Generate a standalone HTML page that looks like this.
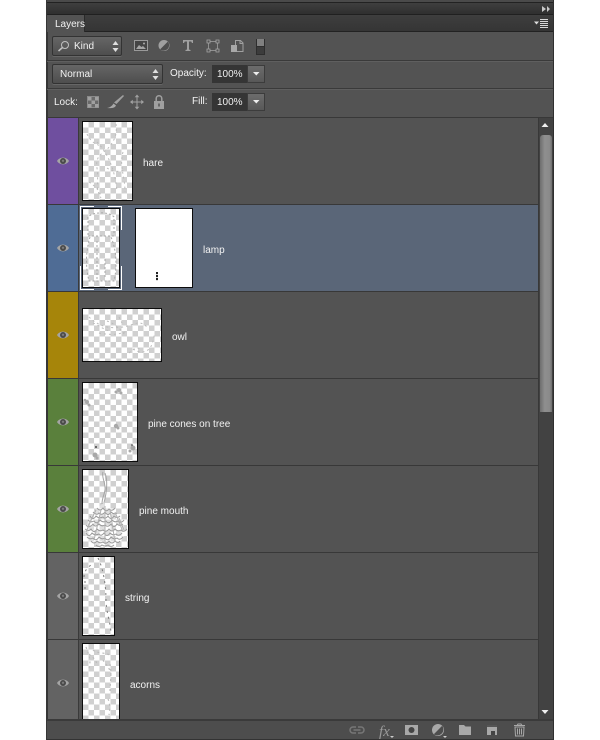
<!DOCTYPE html>
<html><head><meta charset="utf-8">
<style>
html,body{margin:0;padding:0;width:600px;height:740px;overflow:hidden;background:#fff}
*{box-sizing:border-box}
body{font-family:"Liberation Sans",sans-serif;font-size:10px;color:#e8e8e8;position:relative}
.a{position:absolute}
.t{position:absolute;white-space:nowrap;line-height:12px;font-size:10px;color:#f2f2f2;margin-top:1px}
.sep{position:absolute;left:48px;width:490px;height:1px;background:#383838}
.col{position:absolute;left:48px;width:30px}
.th{position:absolute;border:1px solid #0c0c0c;background-color:#fff;background-image:conic-gradient(#d0d0d0 25%,#fff 0 50%,#d0d0d0 0 75%,#fff 0);background-size:11px 11px;background-position:0 0;overflow:hidden}
.th svg{position:absolute;left:0;top:0}
.eye{position:absolute;left:57px}
.dd{position:absolute;border:1px solid #333;border-radius:2px;background:linear-gradient(#666,#4e4e4e);box-shadow:0 1px 0 #666}
.num{position:absolute;left:212px;width:35px;height:18px;background:#353535;color:#f0f0f0;font-size:10px;line-height:20px;padding-left:5px}
.btn{position:absolute;left:247px;width:18px;height:18px;background:linear-gradient(#6c6c6c,#585858);border:1px solid #3c3c3c}
</style></head><body>

<!-- panel shell -->
<div class="a" style="left:46px;top:0;width:508px;height:740px;background:#535353;border-left:2px solid #363636;border-right:1px solid #2f2f2f"></div>
<div class="a" style="left:47px;top:0;width:506px;height:2px;background:#4a4a4a"></div>
<div class="a" style="left:47px;top:2px;width:506px;height:1px;background:#222"></div>
<div class="a" style="left:47px;top:3px;width:506px;height:11px;background:linear-gradient(#3f3f3f,#2f2f2f)"></div>
<div class="a" style="left:47px;top:14px;width:506px;height:1px;background:#202020"></div>
<div class="a" style="left:47px;top:15px;width:506px;height:16px;background:linear-gradient(#3e3e3e,#353535)"></div>
<div class="a" style="left:47px;top:31px;width:506px;height:1px;background:#222"></div>
<div class="a" style="left:47px;top:15px;width:38px;height:17px;background:#535353;border-right:1px solid #2a2a2a"></div>
<div class="t" style="left:55px;top:18px">Layers</div>

<!-- collapse + menu -->
<svg class="a" style="left:541px;top:5px" width="10" height="8"><path d="M1 1l4 3-4 3zM6 1l3 3-3 3z" fill="#c8c8c8"/></svg>
<svg class="a" style="left:534px;top:19px" width="16" height="9"><path d="M0 2.500h5l-2.500 3z" fill="#ddd"/><path d="M6 .5h8M6 2.500h8M6 4.500h8M6 6.500h8M6 8.500h8" stroke="#d8d8d8"/></svg>

<!-- control rows -->
<div class="a" style="left:47px;top:60px;width:506px;height:1px;background:#3a3a3a"></div>
<div class="a" style="left:47px;top:61px;width:506px;height:1px;background:#5f5f5f"></div>
<div class="a" style="left:47px;top:88px;width:506px;height:1px;background:#3a3a3a"></div>
<div class="a" style="left:47px;top:89px;width:506px;height:1px;background:#5f5f5f"></div>
<div class="a" style="left:47px;top:117px;width:506px;height:1px;background:#383838"></div>

<!-- Kind -->
<div class="dd" style="left:52px;top:36px;width:70px;height:20px"></div>
<svg class="a" style="left:57px;top:40px" width="13" height="12" fill="none" stroke="#c0c0c0"><circle cx="8" cy="5" r="3.500"/><path d="M5.500 7.500l-4 3.500" stroke-width="1.500"/></svg>
<div class="t" style="left:74px;top:40px">Kind</div>
<svg class="a" style="left:112px;top:41px" width="7" height="11"><path d="M3.500 0l3 4h-6zM3.500 11l3-4h-6z" fill="#e0e0e0"/></svg>

<!-- filter icons -->
<svg class="a" style="left:133px;top:39px" width="135" height="18">
 <rect x="1.500" y="1.500" width="13" height="10" fill="#444" stroke="#9a9a9a"/>
 <path d="M3 10l3-4 2.500 2 1.500-1 3 3z" fill="#a5a5a5"/><circle cx="11" cy="4.500" r="1" fill="#aaa"/>
 <circle cx="31" cy="6.500" r="5.500" fill="#a0a0a0"/><path d="M34.800 2.600A5.500 5.500 0 0 1 27.100 10.400z" fill="#4e4e4e"/>
 <path d="M50 1h10v3h-1l-.8-1.500h-2.200v8l1.500.5v1h-5v-1l1.500-.5v-8h-2.200L51 4h-1z" fill="#a0a0a0"/>
 <path d="M75.500 2.500h9v9h-9z" fill="none" stroke="#909090"/><path d="M74 1h3v3h-3zM83 1h3v3h-3zM74 10h3v3h-3zM83 10h3v3h-3z" fill="#535353" stroke="#a5a5a5" stroke-width=".8"/>
 <path d="M102.500 1.500h5l2.500 2.500v8.500h-7.500z" fill="none" stroke="#a0a0a0"/><path d="M107 1.500v3h3" fill="none" stroke="#a0a0a0"/>
 <rect x="98" y="6" width="6" height="7" fill="#a8a8a8"/>
 <rect x="123" y="-2" width="9" height="18" fill="#2e2e2e"/><rect x="124" y="-1" width="7" height="8" fill="#808080"/><rect x="124" y="8" width="7" height="7" fill="#3c3c3c"/>
</svg>

<!-- Normal / Opacity -->
<div class="dd" style="left:52px;top:64px;width:111px;height:20px"></div>
<div class="t" style="left:60px;top:68px">Normal</div>
<svg class="a" style="left:152px;top:69px" width="7" height="11"><path d="M3.500 0l3 4h-6zM3.500 11l3-4h-6z" fill="#e0e0e0"/></svg>
<div class="t" style="left:170px;top:67px">Opacity:</div>
<div class="num" style="top:65px">100%</div>
<div class="btn" style="top:65px"></div>
<svg class="a" style="left:253px;top:72px" width="7" height="5"><path d="M0 0h6.500l-3.200 3.500z" fill="#eee"/></svg>

<!-- Lock -->
<div class="t" style="left:54px;top:96px">Lock:</div>
<svg class="a" style="left:86px;top:94px" width="80" height="16">
 <rect x="1.500" y="2.500" width="11" height="11" fill="#6a6a6a" stroke="#8a8a8a"/>
 <path d="M2 3h3.500v3.500H2zM9 3h3.500v3.500H9zM5.500 6.500H9V10H5.500zM2 10h3.500v3.500H2zM9 10h3.500v3.500H9z" fill="#a0a0a0"/>
 <path d="M37 1l1 1-7.500 8-2.500-1.500z" fill="#a0a0a0"/><path d="M27.500 9.500l2.500 2c-1 2.500-5 3-9 2.500 3-.5 5-2 6.500-4.500z" fill="#a8a8a8"/>
 <path d="M51 2v12M45 8h12" stroke="#a0a0a0"/><path d="M51 .5l2.300 2.800h-4.600zM51 15.500l2.300-2.800h-4.600zM44 8l2.800-2.300v4.600zM58 8l-2.800-2.300v4.600z" fill="#a0a0a0"/>
 <rect x="68" y="7" width="10" height="8" fill="#a0a0a0"/><path d="M70.200 7V4.500a2.800 2.800 0 0 1 5.600 0V7" fill="none" stroke="#a0a0a0" stroke-width="1.500"/><rect x="72" y="9.500" width="2" height="3" fill="#666"/>
</svg>
<div class="t" style="left:192px;top:95px">Fill:</div>
<div class="num" style="top:93px">100%</div>
<div class="btn" style="top:93px"></div>
<svg class="a" style="left:253px;top:100px" width="7" height="5"><path d="M0 0h6.500l-3.200 3.500z" fill="#eee"/></svg>

<!-- rows -->
<div class="a" style="left:79px;top:205px;width:459px;height:86px;background:#5a6678"></div>
<div class="col" style="top:118px;height:86px;background:#6f4f9f"></div>
<div class="col" style="top:205px;height:86px;background:#4f6c95"></div>
<div class="col" style="top:292px;height:86px;background:#a6850a"></div>
<div class="col" style="top:379px;height:86px;background:#5a803c"></div>
<div class="col" style="top:466px;height:86px;background:#5a803c"></div>
<div class="col" style="top:553px;height:86px;background:#636363"></div>
<div class="col" style="top:640px;height:79px;background:#636363"></div>
<div class="a" style="left:78px;top:118px;width:1px;height:601px;background:#3a3a3a"></div>
<div class="sep" style="top:204px"></div><div class="sep" style="top:291px"></div><div class="sep" style="top:378px"></div>
<div class="sep" style="top:465px"></div><div class="sep" style="top:552px"></div><div class="sep" style="top:639px"></div>

<!-- eyes -->
<svg width="0" height="0" style="position:absolute"><defs><g id="e"><path d="M0 5C2.500 .5 9.500 .5 12 5 9.500 9.500 2.500 9.500 0 5z" fill="#a4a4a4"/><path d="M2.500 3.500c2-1.500 5-1.500 7 0z" fill="#c0c0c0"/><circle cx="6" cy="5" r="3" fill="#4a4a4a"/><circle cx="6" cy="4.800" r="1.200" fill="#7a7a7a"/></g></defs></svg>
<svg class="eye" style="top:156px" width="12" height="10"><use href="#e"/></svg>
<svg class="eye" style="top:243px" width="12" height="10"><use href="#e"/></svg>
<svg class="eye" style="top:330px" width="12" height="10"><use href="#e"/></svg>
<svg class="eye" style="top:417px" width="12" height="10"><use href="#e"/></svg>
<svg class="eye" style="top:504px" width="12" height="10"><use href="#e"/></svg>
<svg class="eye" style="top:591px" width="12" height="10"><use href="#e"/></svg>
<svg class="eye" style="top:678px" width="12" height="10"><use href="#e"/></svg>

<!-- thumbs -->
<div class="th" style="left:82px;top:121px;width:51px;height:80px"><svg width="49" height="78" fill="none" stroke="#bcbcbc" stroke-width="1" stroke-dasharray="2 3"><path d="M33 2c1 8 0 14-6 22S12 32 14 46s-2 20 4 30M14 20c8 8 18 24 20 50M40 30c-4 14 2 24 2 40M4 12c4 8 8 10 14 12M24 46c6 4 12 4 18 2M6 60c6 4 10 8 12 14"/></svg></div>

<div class="th" style="left:82px;top:208px;width:38px;height:80px"><svg width="36" height="78" fill="none" stroke="#a8a8a8" stroke-width="1" stroke-dasharray="2 2"><path d="M5 26V8C9 3 26 2 31 8V26M5 27h26M7 28C2 45 3 60 6 72h25C34 60 34 42 28 28M14 32v38M22 50v20"/></svg></div>
<svg class="a" style="left:80px;top:206px" width="42" height="84" fill="none" stroke="#fff"><path d="M.5 24V.5H14M28 .5H41.500V24M.5 60v23.500H14M28 83.500H41.500V60"/></svg>
<div class="a" style="left:135px;top:208px;width:58px;height:80px;background:#fff;border:1px solid #0c0c0c"></div>
<div class="a" style="left:156px;top:272px;width:2px;height:9px;background:repeating-linear-gradient(#222 0 2px,#ddd 2px 3px)"></div>

<div class="th" style="left:82px;top:308px;width:80px;height:54px"><svg width="78" height="52" fill="none" stroke="#bcbcbc" stroke-width="1" stroke-dasharray="2 3"><path d="M6 8c10 10 22 12 34 10s16-8 24 0M16 24c10 2 20 2 28-2M50 40c6 4 12 4 16 0s4-10 6-16M36 8l4 8M46 44c4-4 8-6 12-4M10 14c6 2 12 8 18 8M24 12c6 2 12 6 18 14"/></svg></div>

<div class="th" style="left:82px;top:382px;width:56px;height:80px"><svg width="54" height="78" fill="#a8a8a8"><circle cx="36" cy="7" r="2"/><circle cx="33" cy="9" r="1.500"/><circle cx="38" cy="10" r="1.500"/><circle cx="4" cy="19" r="2"/><circle cx="6" cy="22" r="1.500"/><circle cx="2" cy="17" r="1.200"/><circle cx="33" cy="43" r="2.200"/><circle cx="35" cy="45" r="1.500"/><circle cx="50" cy="65" r="2.500"/><circle cx="47" cy="68" r="1.500"/><circle cx="12" cy="72" r="2.500"/><circle cx="14" cy="75" r="1.500"/><circle cx="13" cy="64" r="1" fill="#444"/><circle cx="49" cy="62" r=".8" fill="#333"/></svg></div>

<div class="th" style="left:82px;top:469px;width:47px;height:80px"><svg width="45" height="78" fill="none" stroke="#9a9a9a" stroke-width="1">
 <path d="M20 2c-2 4 3 12 2 18s-3 8-3 14M22 3c3 8 2 18-1 30" stroke="#a5a5a5"/>
 <path d="M21 33C12 38 4 50 2 60c-1 8 5 15 19 17 14-1 22-8 21-17C40 50 30 38 21 33z" fill="#fff" fill-opacity=".35" stroke="none"/>
 <path d="M14 38q3 4 6 0q3 5 6 1q3 3 6-1M10 42q4 4 6 1q3 3 6-1q3 5 6 0q3 3 6 1M7 46q3 5 6 0q3 3 7 1q2 3 5-1q3 5 6 0q3 3 6 0M5 50q3 3 6 1q3 4 6-1q3 3 6 1q3 4 6-1q3 3 6 1q3 3 6-1M3 55q3 4 7-1q2 4 6 0q3 3 6 1q3 3 6-1q3 5 6 0q3 3 6 0M2 59q4 3 6 0q3 5 6 0q3 3 6 1q3 3 6-1q3 4 6 0q3 3 6 1q3 3 6-1M3 63q3 5 6 0q3 3 7 1q2 3 5-1q3 5 6 0q3 3 6 1q3 3 6-1M4 67q3 3 6 1q3 4 6-1q3 3 6 1q3 4 6-1q3 3 6 1q3 3 6-1M8 71q3 4 6 0q3 3 6 1q3 3 6-1q3 4 6 0q3 3 5 0M13 75q3 3 6 0q3 2 6 0q3 3 6 0"/>
 <path d="M13 40L5 56M18 40L11 70M22 36v38M27 40l5 32M32 42l8 20M9 48L3 62M36 48l5 12" stroke="#b0b0b0"/>
</svg></div>

<div class="th" style="left:82px;top:556px;width:33px;height:80px"><svg width="31" height="78" fill="none" stroke="#777" stroke-dasharray="2 4"><path d="M15 1c6 12 8 30 8 42s5 24 5 34M1 20c0-6 4-10 7-12M2 24v12"/></svg></div>

<div class="th" style="left:82px;top:643px;width:38px;height:76px;border-bottom:0"><svg width="36" height="76" fill="none" stroke="#bcbcbc" stroke-width="1.200" stroke-dasharray="2 3"><path d="M3 3c3 8 6 14 2 24M10 6c4 4 14 2 18 6M27 20c2 10 0 20 0 28M25 55c2 4 2 10 1 16M6 10c3 3 6 4 8 10M20 16c2 4 6 6 8 14"/></svg></div>

<!-- labels -->
<div class="t" style="left:143px;top:157px">hare</div>
<div class="t" style="left:203px;top:244px">lamp</div>
<div class="t" style="left:172px;top:331px">owl</div>
<div class="t" style="left:148px;top:418px">pine cones on tree</div>
<div class="t" style="left:139px;top:505px">pine mouth</div>
<div class="t" style="left:125px;top:592px">string</div>
<div class="t" style="left:130px;top:679px">acorns</div>

<!-- scrollbar -->
<div class="a" style="left:538px;top:118px;width:15px;height:601px;background:#424242;border-left:1px solid #383838"></div>
<div class="a" style="left:540px;top:135px;width:12px;height:277px;background:linear-gradient(90deg,#6e6e6e,#8f8f8f 40%,#8a8a8a 80%,#6e6e6e);border-radius:3px 3px 0 0"></div>
<svg class="a" style="left:541px;top:123px" width="8" height="5"><path d="M4 0l3.500 4H.5z" fill="#eee"/></svg>
<svg class="a" style="left:541px;top:710px" width="8" height="5"><path d="M4 4L.5 0h7z" fill="#eee"/></svg>

<!-- bottom bar -->
<div class="a" style="left:47px;top:719px;width:506px;height:2px;background:#3a3a3a"></div>
<div class="a" style="left:47px;top:721px;width:506px;height:18px;background:#4d4d4d"></div>
<div class="a" style="left:47px;top:739px;width:506px;height:1px;background:#333"></div>
<svg class="a" style="left:345px;top:722px" width="190" height="17">
 <path d="M9 5H6a3 3 0 0 0 0 6h3M11 5h3a3 3 0 0 1 0 6h-3M6.500 8h7" fill="none" stroke="#777" stroke-width="1.500" transform="translate(2 0)"/>
 <text x="34" y="14" font-family="Liberation Serif,serif" font-style="italic" font-size="15" fill="#9a9a9a">fx</text>
 <path d="M45 14h4l-2 2z" fill="#ccc"/>
 <rect x="60" y="3" width="13" height="10" fill="#a8a8a8"/><circle cx="66.500" cy="8" r="3" fill="#444"/>
 <circle cx="93" cy="8" r="6" fill="#a8a8a8"/><path d="M97.200 3.800A6 6 0 0 1 88.800 12.200z" fill="#4d4d4d"/>
 <path d="M98 14h4l-2 2z" fill="#ccc"/>
 <path d="M114 3h5l1.500 1.500h5.500V13h-12z" fill="#a8a8a8"/>
 <path d="M142 3h10v10h-10z" fill="#a8a8a8"/><path d="M146 9h4v4h-4z" fill="#444"/><path d="M142 3h10v2h-10z" fill="#555"/>
 <path d="M169 3.500h11M172 3.500l1-1.500h3l1 1.500" fill="none" stroke="#a8a8a8"/><path d="M170 5h9l-.5 9h-8z" fill="none" stroke="#a8a8a8"/><path d="M172.500 6.500v6M174.500 6.500v6M176.500 6.500v6" stroke="#a8a8a8"/>
</svg>
</body></html>
